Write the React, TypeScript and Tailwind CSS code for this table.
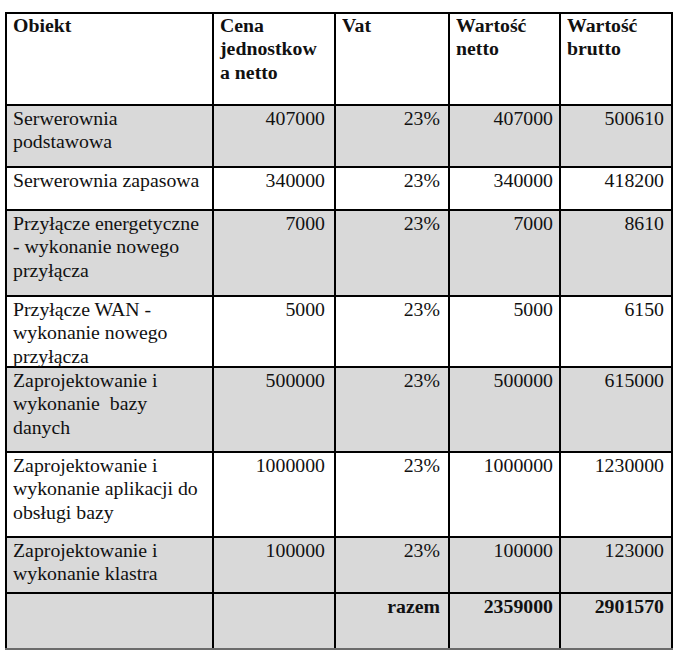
import React from "react";

type Row = { name: string[]; cena: string; vat: string; netto: string; brutto: string; bg: string; h: string };

const rows: Row[] = [
  { name: ["Serwerownia", "podstawowa"], cena: "407000", vat: "23%", netto: "407000", brutto: "500610", bg: "bg-[#d9d9d9]", h: "h-[60px]" },
  { name: ["Serwerownia zapasowa"], cena: "340000", vat: "23%", netto: "340000", brutto: "418200", bg: "bg-white", h: "h-[41px]" },
  { name: ["Przyłącze energetyczne", "- wykonanie nowego", "przyłącza"], cena: "7000", vat: "23%", netto: "7000", brutto: "8610", bg: "bg-[#d9d9d9]", h: "h-[84px]" },
  { name: ["Przyłącze WAN -", "wykonanie nowego", "przyłącza"], cena: "5000", vat: "23%", netto: "5000", brutto: "6150", bg: "bg-white", h: "h-[69px]" },
  { name: ["Zaprojektowanie i", "wykonanie\u00a0 bazy", "danych"], cena: "500000", vat: "23%", netto: "500000", brutto: "615000", bg: "bg-[#d9d9d9]", h: "h-[83px]" },
  { name: ["Zaprojektowanie i", "wykonanie aplikacji do", "obsługi bazy"], cena: "1000000", vat: "23%", netto: "1000000", brutto: "1230000", bg: "bg-white", h: "h-[83px]" },
  { name: ["Zaprojektowanie i", "wykonanie klastra"], cena: "100000", vat: "23%", netto: "100000", brutto: "123000", bg: "bg-[#d9d9d9]", h: "h-[54px]" },
];

function L({ lines }: { lines: string[] }) {
  return (
    <>
      {lines.map((l, i) => (
        <div key={i} className="whitespace-pre origin-left scale-x-[1.1]">
          {l}
        </div>
      ))}
    </>
  );
}

function R({ children }: { children: React.ReactNode }) {
  return <div className="whitespace-pre text-right origin-right scale-x-[1.1]">{children}</div>;
}

export default function App() {
  return (
    <div className="w-[684px] h-[660px] bg-white overflow-hidden pt-[12px] pl-[5px] font-['Liberation_Serif','Times_New_Roman',serif]">
      <div className="bg-black p-[2px] pb-0 w-fit">
        <div className="grid grid-cols-[205px_120px_112px_109px_110px] gap-[2px] text-[18px] leading-[23.3px] text-[#111]">
          <div className="bg-white h-[90px] pl-[6px] pt-[1px] font-bold">
            <L lines={["Obiekt"]} />
          </div>
          <div className="bg-white h-[90px] pl-[6px] pt-[1px] font-bold">
            <L lines={["Cena", "jednostkow", "a netto"]} />
          </div>
          <div className="bg-white h-[90px] pl-[6px] pt-[1px] font-bold">
            <L lines={["Vat"]} />
          </div>
          <div className="bg-white h-[90px] pl-[6px] pt-[1px] font-bold">
            <L lines={["Wartość", "netto"]} />
          </div>
          <div className="bg-white h-[90px] pl-[6px] pt-[1px] font-bold">
            <L lines={["Wartość", "brutto"]} />
          </div>

          {rows.map((r, i) => (
            <React.Fragment key={i}>
              <div className={`${r.bg} ${r.h} pl-[6px] pt-[2px]`}>
                <L lines={r.name} />
              </div>
              <div className={`${r.bg} ${r.h} pr-[9px] pt-[2px]`}>
                <R>{r.cena}</R>
              </div>
              <div className={`${r.bg} ${r.h} pr-[8px] pt-[2px]`}>
                <R>{r.vat}</R>
              </div>
              <div className={`${r.bg} ${r.h} pr-[6px] pt-[2px]`}>
                <R>{r.netto}</R>
              </div>
              <div className={`${r.bg} ${r.h} pr-[7px] pt-[2px]`}>
                <R>{r.brutto}</R>
              </div>
            </React.Fragment>
          ))}

          <div className="bg-[#d9d9d9] h-[54px]" />
          <div className="bg-[#d9d9d9] h-[54px]" />
          <div className="bg-[#d9d9d9] h-[54px] pr-[8px] pt-[2px] font-bold">
            <R>razem</R>
          </div>
          <div className="bg-[#d9d9d9] h-[54px] pr-[6px] pt-[2px] font-bold">
            <R>2359000</R>
          </div>
          <div className="bg-[#d9d9d9] h-[54px] pr-[7px] pt-[2px] font-bold">
            <R>2901570</R>
          </div>
        </div>
      </div>
      <div className="w-[668px] h-[2px] bg-[#6b6b6b]" />
    </div>
  );
}
